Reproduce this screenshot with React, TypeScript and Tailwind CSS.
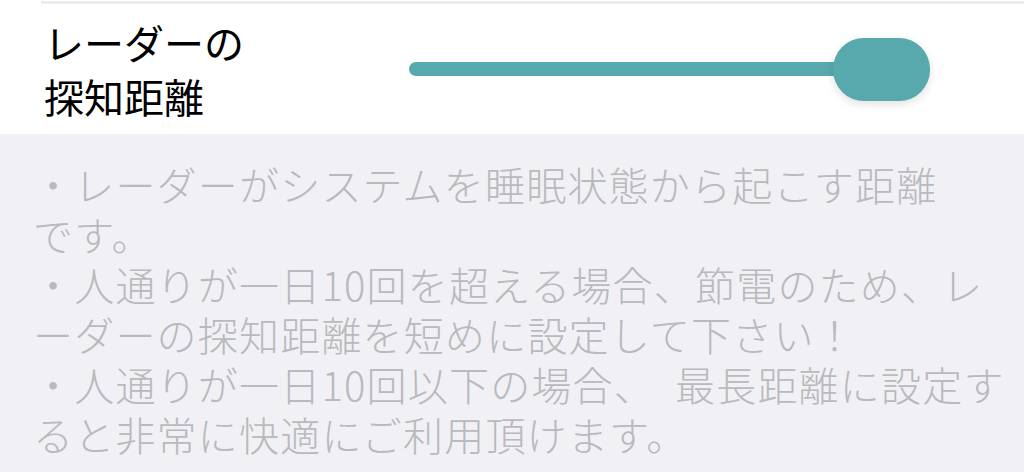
const bodyLines = [
  '・レーダーがシステムを睡眠状態から起こす距離',
  'です。',
  '・人通りが一日10回を超える場合、節電のため、レ',
  'ーダーの探知距離を短めに設定して下さい！',
  null,
  'ると非常に快適にご利用頂けます。',
];

function RangeSlider() {
  return (
    <div className="relative flex h-[63px] flex-1 items-center">
      <div className="h-[14px] flex-1 rounded-full bg-[#58a9ad]" />
      <div className="absolute right-0 top-0 h-[63px] w-[97px] rounded-[31px] bg-[#58a9ad] shadow-[0_3px_10px_rgba(0,0,0,0.12)]" />
    </div>
  );
}

export default function App() {
  return (
    <div className="h-[472px] w-[1024px] overflow-hidden bg-[#f1f1f5] font-['Noto_Sans_CJK_JP',sans-serif]">
      <div className="flex h-[134px] flex-col bg-white">
        <div className="ml-[41px] mt-[1px] h-[3px] bg-[#ececf0]" />
        <div className="flex flex-1 items-center pl-[44px] pr-[94px]">
          <div className="w-[365px] text-[40px] leading-[54px] text-black">
            レーダーの
            <br />
            探知距離
          </div>
          <RangeSlider />
        </div>
      </div>
      <div className="px-[33px] pt-[25px] text-[40px] font-light leading-[50px] tracking-[1.2px] text-[#b9b9be]">
        {bodyLines.map((line, i) =>
          line === null ? (
            <div key={i} className="whitespace-nowrap">
              ・人通りが一日10回以下の場合、
              <span className="inline-block w-[20px]" />
              最長距離に設定す
            </div>
          ) : (
            <div key={i} className="whitespace-nowrap">
              {line}
            </div>
          )
        )}
      </div>
    </div>
  );
}
